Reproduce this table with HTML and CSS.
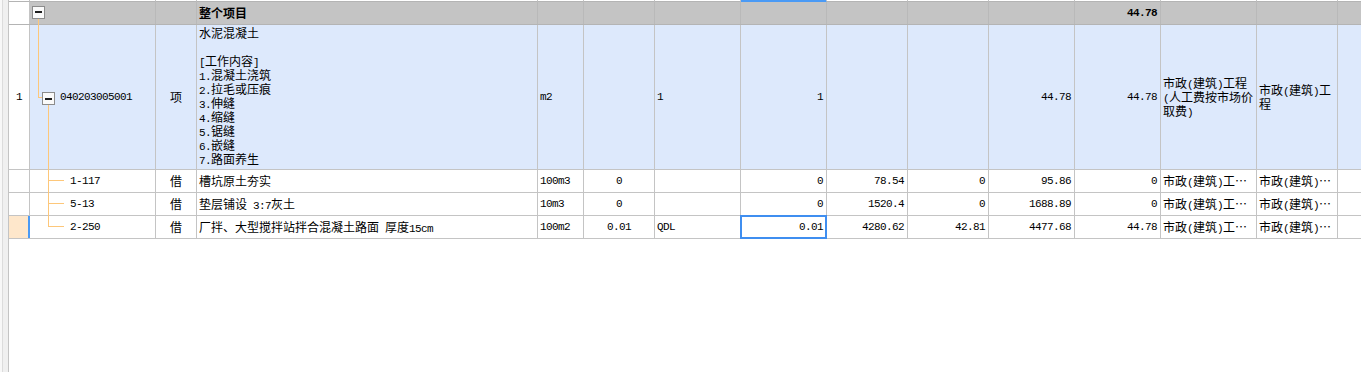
FILE: index.html
```html
<!DOCTYPE html>
<html lang="zh-CN">
<head>
<meta charset="utf-8">
<title>清单</title>
<link rel="stylesheet" href="styles.css">
</head>
<body>
<div class="page">
  <div class="strip"></div>
  <div class="grid">
    <div class="row hdr">
      <div class="c"></div><div class="c"></div><div class="c"></div><div class="c"></div><div class="c"></div>
      <div class="c"></div><div class="c"></div><div class="c sel"></div><div class="c"></div><div class="c"></div>
      <div class="c"></div><div class="c"></div><div class="c"></div><div class="c"></div><div class="c"></div>
    </div>

    <div class="row group">
      <div class="c num"></div>
      <div class="c tree"><span class="box gbox"></span></div>
      <div class="c"></div>
      <div class="c b">整个项目</div>
      <div class="c"></div><div class="c"></div><div class="c"></div><div class="c"></div><div class="c"></div><div class="c"></div><div class="c"></div>
      <div class="c r b"><span class="m">44.78</span></div>
      <div class="c"></div><div class="c"></div><div class="c"></div>
    </div>

    <div class="row main">
      <div class="c num ctr"><span class="m">1</span></div>
      <div class="c tree"><span class="box mbox"></span><span class="m code">040203005001</span></div>
      <div class="c ctr">项</div>
      <div class="c top"><div class="t">水泥混凝土<br><br><span class="m">[</span>工作内容<span class="m">]</span><br><span class="m">1.</span>混凝土浇筑<br><span class="m">2.</span>拉毛或压痕<br><span class="m">3.</span>伸缝<br><span class="m">4.</span>缩缝<br><span class="m">5.</span>锯缝<br><span class="m">6.</span>嵌缝<br><span class="m">7.</span>路面养生</div></div>
      <div class="c"><span class="m">m2</span></div>
      <div class="c"></div>
      <div class="c"><span class="m">1</span></div>
      <div class="c r"><span class="m">1</span></div>
      <div class="c"></div>
      <div class="c"></div>
      <div class="c r"><span class="m">44.78</span></div>
      <div class="c r"><span class="m">44.78</span></div>
      <div class="c"><div class="t">市政<span class="m">(</span>建筑<span class="m">)</span>工程<br><span class="m">(</span>人工费按市场价<br>取费<span class="m">)</span></div></div>
      <div class="c"><div class="t">市政<span class="m">(</span>建筑<span class="m">)</span>工<br>程</div></div>
      <div class="c"></div>
    </div>

    <div class="row sub">
      <div class="c num"></div>
      <div class="c child"><span class="m">1-117</span></div>
      <div class="c ctr">借</div>
      <div class="c">槽坑原土夯实</div>
      <div class="c"><span class="m">100m3</span></div>
      <div class="c ctr"><span class="m">0</span></div>
      <div class="c"></div>
      <div class="c r"><span class="m">0</span></div>
      <div class="c r"><span class="m">78.54</span></div>
      <div class="c r"><span class="m">0</span></div>
      <div class="c r"><span class="m">95.86</span></div>
      <div class="c r"><span class="m">0</span></div>
      <div class="c"><span class="t">市政<span class="m">(</span>建筑<span class="m">)</span>工…</span></div>
      <div class="c"><span class="t">市政<span class="m">(</span>建筑<span class="m">)</span>…</span></div>
      <div class="c"></div>
    </div>

    <div class="row sub">
      <div class="c num"></div>
      <div class="c child"><span class="m">5-13</span></div>
      <div class="c ctr">借</div>
      <div class="c"><span class="t">垫层铺设<span class="m"> 3:7</span>灰土</span></div>
      <div class="c"><span class="m">10m3</span></div>
      <div class="c ctr"><span class="m">0</span></div>
      <div class="c"></div>
      <div class="c r"><span class="m">0</span></div>
      <div class="c r"><span class="m">1520.4</span></div>
      <div class="c r"><span class="m">0</span></div>
      <div class="c r"><span class="m">1688.89</span></div>
      <div class="c r"><span class="m">0</span></div>
      <div class="c"><span class="t">市政<span class="m">(</span>建筑<span class="m">)</span>工…</span></div>
      <div class="c"><span class="t">市政<span class="m">(</span>建筑<span class="m">)</span>…</span></div>
      <div class="c"></div>
    </div>

    <div class="row sub">
      <div class="c num pch"></div>
      <div class="c child"><span class="m">2-250</span></div>
      <div class="c ctr">借</div>
      <div class="c"><span class="t">厂拌、大型搅拌站拌合混凝土路面<span class="m"> </span>厚度<span class="m">15cm</span></span></div>
      <div class="c"><span class="m">100m2</span></div>
      <div class="c ctr"><span class="m">0.01</span></div>
      <div class="c"><span class="m">QDL</span></div>
      <div class="c r selc"><span class="m">0.01</span></div>
      <div class="c r"><span class="m">4280.62</span></div>
      <div class="c r"><span class="m">42.81</span></div>
      <div class="c r"><span class="m">4477.68</span></div>
      <div class="c r"><span class="m">44.78</span></div>
      <div class="c"><span class="t">市政<span class="m">(</span>建筑<span class="m">)</span>工…</span></div>
      <div class="c"><span class="t">市政<span class="m">(</span>建筑<span class="m">)</span>…</span></div>
      <div class="c"></div>
    </div>
  </div>

  <svg class="treelines" width="70" height="240" viewBox="0 0 70 240" aria-hidden="true">
    <path d="M38.5 19V97.5H42M48.5 105V226.5H64M48 180.5H64M48 203.5H64" fill="none" stroke="#fdc77a" stroke-width="1" shape-rendering="crispEdges"/>
  </svg>
</div>
</body>
</html>
```

FILE: styles.css
```css
* {
  box-sizing: border-box;
}

html,
body {
  margin: 0;
  padding: 0;
  background: #ffffff;
}

body {
  font-family: "Noto Sans CJK SC", "Liberation Sans", sans-serif;
  font-size: 12px;
  line-height: 14px;
  color: #000000;
}

.page {
  position: relative;
  display: flex;
  width: 1361px;
  height: 372px;
  overflow: hidden;
}

.strip {
  flex: none;
  width: 9px;
  border-right: 1px solid #c4c4c4;
  background: linear-gradient(to right, #f8f8f8 0 2px, #dcdcdc 2px 3px, #f0f0f0 3px);
}

.grid {
  flex: 1;
  min-width: 0;
  overflow: hidden;
}

.row {
  display: grid;
  grid-template-columns: 21px 126px 41px 341px 46px 71px 86px 86px 81px 81px 86px 86px 96px 81px 80px;
  border-bottom: 1px solid #c4c4c4;
}

.c {
  display: flex;
  align-items: center;
  min-width: 0;
  padding: 0 2px;
  border-right: 1px solid #c4c4c4;
  white-space: nowrap;
  overflow: hidden;
}

.r {
  justify-content: flex-end;
  padding-right: 3px;
}

.ctr {
  justify-content: center;
}

.b {
  font-weight: bold;
}

.m {
  font-family: "Liberation Mono", "DejaVu Sans Mono", monospace;
  font-size: 11px;
  letter-spacing: -0.6px;
}

.t {
  white-space: pre;
}

.t .m {
  line-height: 8px;
}

.b .m {
  font-weight: bold;
}

/* header remnant */
.hdr {
  height: 2px;
  border-bottom: none;
}

.hdr .c {
  border-bottom: 1px solid #b4b4b4;
}

.hdr .sel {
  background: #4a9af5;
  border-bottom-color: #4a9af5;
}

/* group row */
.group {
  height: 23px;
  border-bottom-color: #b4b4b4;
}

.group .c {
  background: #c4c4c4;
  border-right-color: #b9b9b9;
}

.group .num {
  background: #ffffff;
  border-right-color: #c4c4c4;
}

/* main item row */
.main {
  height: 145px;
}

.main .c {
  background: #dde9fc;
}

.main .num {
  background: #ffffff;
}

.main .top {
  align-items: flex-start;
  padding-top: 1px;
}

/* sub rows */
.sub {
  height: 23px;
}

/* tree */
.tree {
  padding: 0;
}

.box {
  flex: none;
  display: flex;
  align-items: center;
  justify-content: center;
  width: 13px;
  height: 13px;
  border: 1px solid #8c8c8c;
  background: #fafafa;
}

.box::before {
  content: "";
  width: 7px;
  height: 2px;
  background: #1e1e1e;
}

.gbox {
  margin-left: 2px;
  margin-bottom: 2px;
}

.mbox {
  margin-left: 12px;
  margin-top: 3px;
}

.code {
  margin-left: 5px;
}

.child {
  padding-left: 40px;
}

.treelines {
  position: absolute;
  left: 0;
  top: 0;
  pointer-events: none;
}

/* selection */
.pch {
  background: #fee7cb;
  border-right-color: #4a9af5;
  box-shadow: inset -1px 0 0 #4a9af5;
}

.selc {
  position: relative;
  overflow: visible;
}

.selc::after {
  content: "";
  position: absolute;
  top: -1px;
  left: -1px;
  right: -1px;
  bottom: -1px;
  border: 2px solid #3f8ef0;
  pointer-events: none;
}
```
